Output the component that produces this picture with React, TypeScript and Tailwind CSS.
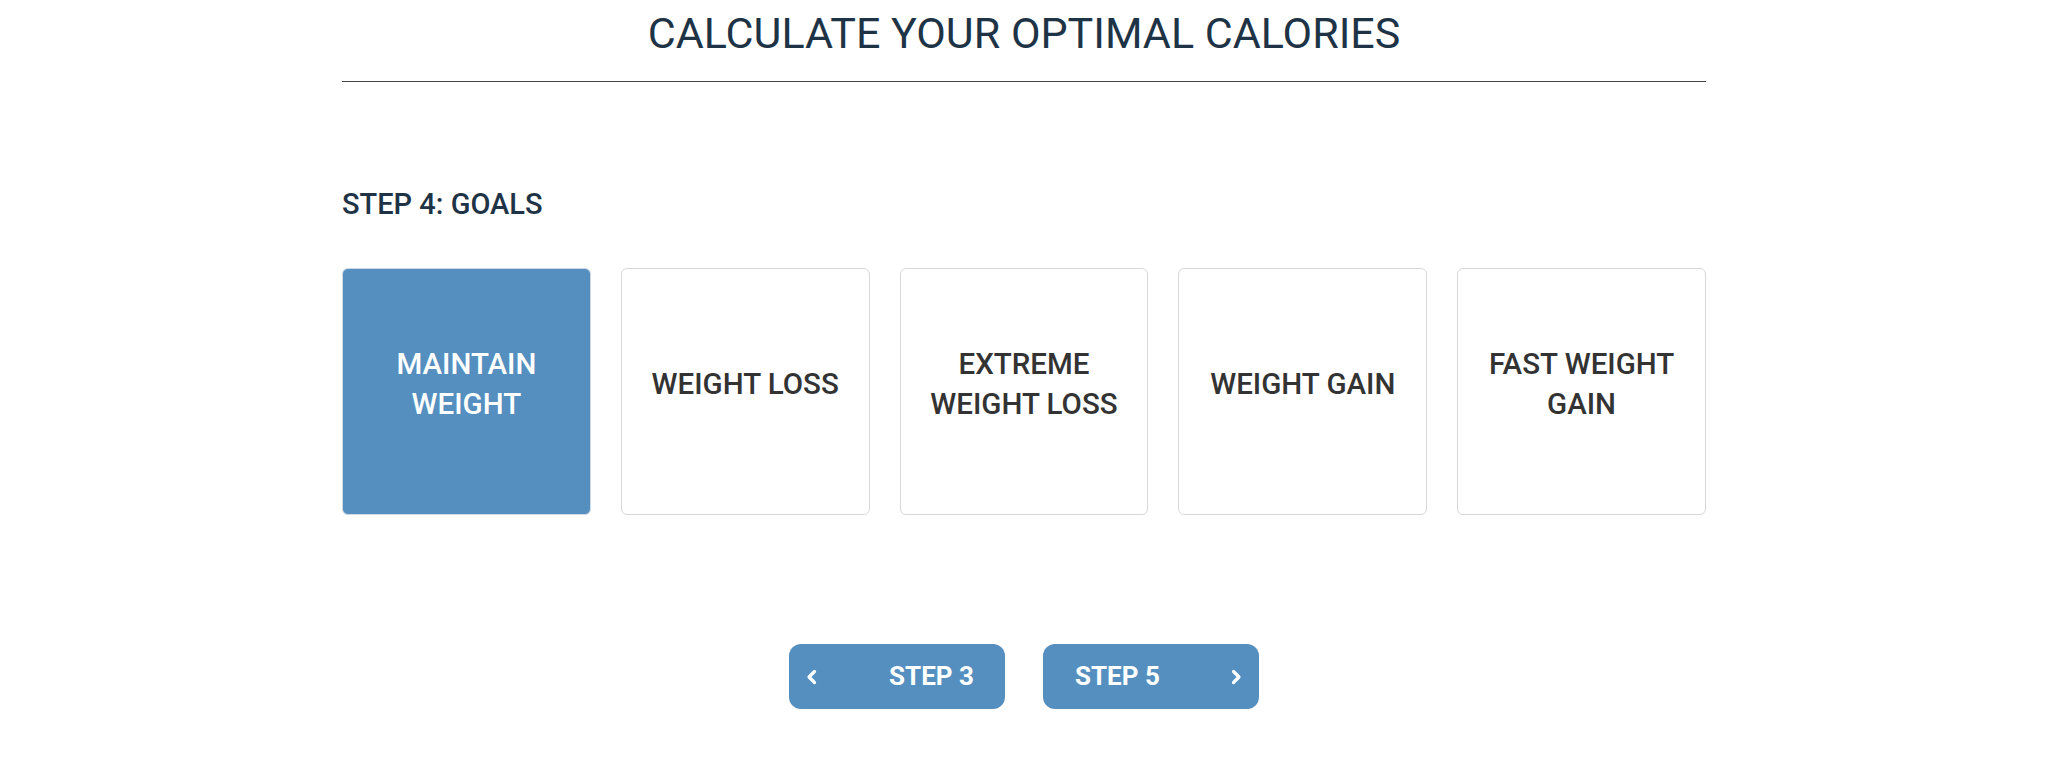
import React from "react";

const goals = [
  { label: "MAINTAIN WEIGHT", active: true },
  { label: "WEIGHT LOSS", active: false },
  { label: "EXTREME WEIGHT LOSS", active: false },
  { label: "WEIGHT GAIN", active: false },
  { label: "FAST WEIGHT GAIN", active: false },
];

function ChevronLeft() {
  return (
    <svg width="16" height="18" viewBox="0 0 16 18" fill="none">
      <path d="M10.5 3.5L5 9L10.5 14.5" stroke="white" strokeWidth="3.2" strokeLinecap="round" strokeLinejoin="round" />
    </svg>
  );
}

function ChevronRight() {
  return (
    <svg width="16" height="18" viewBox="0 0 16 18" fill="none">
      <path d="M5.5 3.5L11 9L5.5 14.5" stroke="white" strokeWidth="3.2" strokeLinecap="round" strokeLinejoin="round" />
    </svg>
  );
}

export default function App() {
  return (
    <div className="w-full min-h-[774px] bg-white font-['Roboto',sans-serif]">
      <div className="w-[1364px] mx-auto">
        <h1 className="text-center text-[43px] leading-[50px] pt-[8px] font-normal text-[#1e3446]">
          CALCULATE YOUR OPTIMAL CALORIES
        </h1>
        <div className="mt-[23px] h-px bg-[#444]" />
        <h2 className="mt-[106px] text-[29px] leading-[32px] font-medium text-[#1e3446]">
          STEP 4: GOALS
        </h2>
        <div className="mt-[48px] grid grid-cols-5 gap-[30px]">
          {goals.map((g) => (
            <div
              key={g.label}
              className={
                g.active
                  ? "h-[247px] rounded-[6px] border border-[#cfd9e3] bg-[#548fc0] flex items-center justify-center px-[20px] pb-[16px]"
                  : "h-[247px] rounded-[6px] border border-[#d8d8d8] bg-white flex items-center justify-center px-[20px] pb-[16px]"
              }
            >
              <span
                className={
                  g.active
                    ? "text-center text-[29.5px] leading-[40px] font-medium text-white"
                    : "text-center text-[29.5px] leading-[40px] font-medium text-[#333]"
                }
              >
                {g.label}
              </span>
            </div>
          ))}
        </div>
        <div className="mt-[129px] flex justify-center gap-[38px]">
          <button className="w-[216px] h-[65px] rounded-[12px] bg-[#548fc0] flex items-center justify-between pl-[15px] pr-[31px]">
            <ChevronLeft />
            <span className="text-white text-[26px] font-bold">STEP 3</span>
          </button>
          <button className="w-[216px] h-[65px] rounded-[12px] bg-[#548fc0] flex items-center justify-between pl-[32px] pr-[15px]">
            <span className="text-white text-[26px] font-bold">STEP 5</span>
            <ChevronRight />
          </button>
        </div>
      </div>
    </div>
  );
}
